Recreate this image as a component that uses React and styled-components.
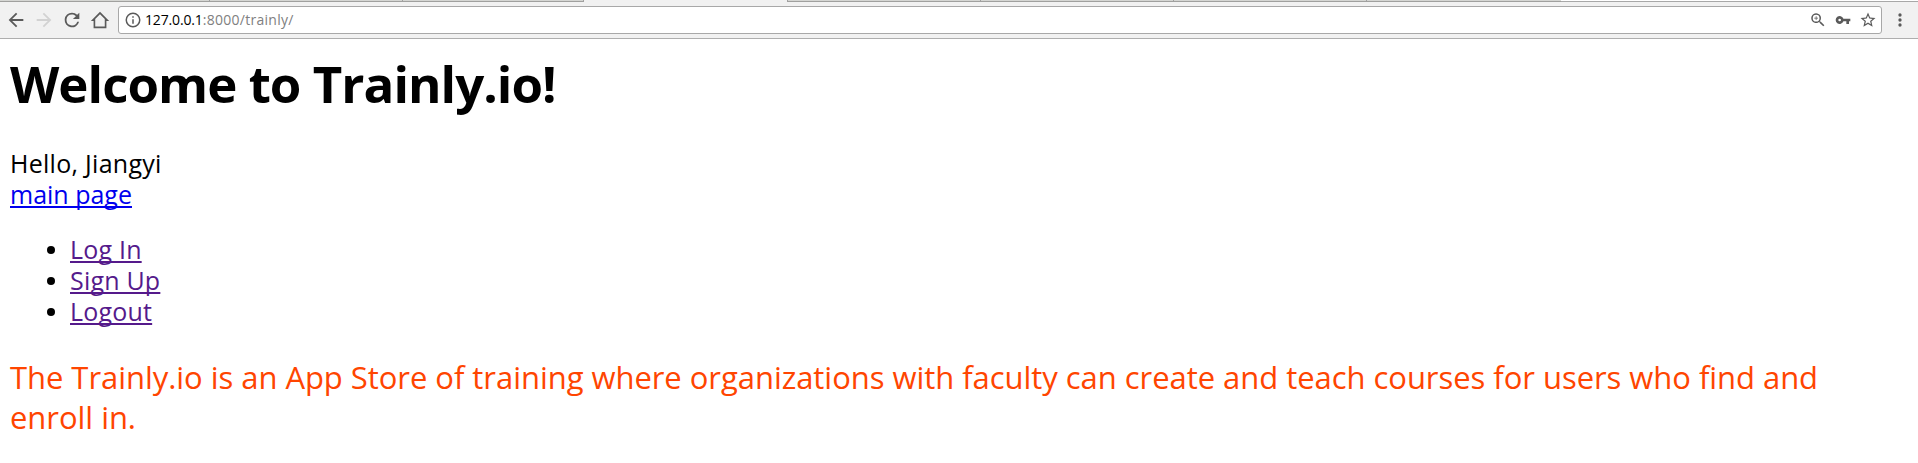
import React from "react";
import styled, { createGlobalStyle } from "styled-components";

const Global = createGlobalStyle`
  body { margin: 0; background: #fff; color: #000; font-family: "Open Sans", "Noto Sans", sans-serif; }
`;
const TabStrip = styled.div`
  display: flex; height: 1px; background: #fff;
`;
const Tab = styled.div`
  width: ${(p) => p.$w}px; box-sizing: border-box; height: 2px; flex: none;
  background: ${(p) => (p.$active ? "#f1f1f1" : "#d5d6d3")};
  border-right: ${(p) => (p.$last ? "none" : "1px solid #a0a0a0")};
  border-bottom: ${(p) => (p.$active ? "none" : "1px solid #a0a09e")};
  position: relative;
`;
const Toolbar = styled.div`
  display: flex; align-items: center; box-sizing: border-box; height: 38px;
  background: #f1f1f1; border-top: 1px solid #a8a8a8; border-bottom: 1px solid #aeaeae;
  padding: 0 8px 0 5px;
`;
const NavIcon = styled.svg`
  width: 22px; height: 22px; flex: none; margin-right: 6px;
  fill: ${(p) => (p.$dim ? "#d2d2d2" : "#5a5a5a")};
`;
const Address = styled.div`
  flex: 1; display: flex; align-items: center; box-sizing: border-box; height: 28px;
  background: #fff; border: 1px solid #a8a8a8; border-radius: 3px; padding: 0 4px 0 5px; margin: 0 8px 0 1px;
`;
const Url = styled.span`
  flex: 1; margin-left: 3px; font-size: 14px; line-height: 20px; letter-spacing: 0.27px; color: #808080;
`;
const Host = styled.span`color: #000; letter-spacing: -0.15px;`;
const FieldIcon = styled.svg`
  width: ${(p) => p.$s || 18}px; height: ${(p) => p.$s || 18}px; flex: none; margin-left: ${(p) => p.$gap || 0}px; fill: #5a5a5a;
`;
const Page = styled.main`padding: 0 10px;`;
const Title = styled.h1`
  margin: 9px 0 0; font-size: 51px; line-height: 70px; font-weight: 700; letter-spacing: -0.95px; white-space: nowrap;
`;
const Greeting = styled.div`margin-top: 30px; font-size: 25px; line-height: 31px;`;
const Hello = styled.span`letter-spacing: 0.28px;`;
const Link = styled.a`
  color: ${(p) => (p.$visited ? "#551a8b" : "#0000ee")};
  letter-spacing: ${(p) => (p.$visited ? "0.2px" : "0")};
  text-decoration: underline; text-decoration-thickness: 2px; text-underline-offset: 2px; text-decoration-skip-ink: none;
`;
const Menu = styled.ul`
  margin: 24px 0 0; padding-left: 60px; font-size: 25px; line-height: 31px; list-style: none;
`;
const Item = styled.li`
  display: flex; align-items: center;
  &::before { content: ""; width: 8px; height: 8px; border-radius: 50%; background: #000; margin: 1px 15px 0 -23px; }
`;
const Pitch = styled.p`
  margin: 30px 0 0; font-size: 31px; line-height: 40px; letter-spacing: -0.045px; color: #ff4500;
  font-variant-ligatures: none;
`;

export default function App() {
  return (
    <>
      <Global />
      <TabStrip>
        <Tab $w={210} /><Tab $w={193} /><Tab $w={181} /><Tab $w={204} $active />
        <Tab $w={193} /><Tab $w={193} /><Tab $w={193} /><Tab $w={194} $last />
      </TabStrip>
      <Toolbar>
        <NavIcon viewBox="0 0 24 24"><path d="M20 11H7.83l5.59-5.59L12 4l-8 8 8 8 1.41-1.41L7.83 13H20v-2z" /></NavIcon>
        <NavIcon viewBox="0 0 24 24" $dim><path d="M12 4l-1.41 1.41L16.17 11H4v2h12.17l-5.58 5.59L12 20l8-8z" /></NavIcon>
        <NavIcon viewBox="0 0 24 24"><path d="M17.65 6.35A7.96 7.96 0 0 0 12 4a8 8 0 1 0 7.73 10h-2.08A6 6 0 1 1 12 6c1.66 0 3.14.69 4.22 1.78L13 11h7V4l-2.35 2.35z" /></NavIcon>
        <NavIcon viewBox="0 0 24 24"><path fillRule="evenodd" d="M12 3l10 10h-3v8H5v-8H2L12 3zm0 2.8L6.8 11v8h10.4v-8L12 5.8z" /></NavIcon>
        <Address>
          <FieldIcon viewBox="0 0 24 24"><path d="M11 7h2v2h-2zm0 4h2v6h-2zm1-9a10 10 0 1 0 0 20 10 10 0 0 0 0-20zm0 18a8 8 0 1 1 0-16 8 8 0 0 1 0 16z" /></FieldIcon>
          <Url><Host>127.0.0.1</Host>:8000/trainly/</Url>
          <FieldIcon viewBox="0 0 24 24"><path d="M15.5 14h-.79l-.28-.27A6.5 6.5 0 1 0 13.73 14.43l.27.28v.79l5 4.99L20.49 19l-4.99-5zm-6 0a4.5 4.5 0 1 1 0-9 4.5 4.5 0 0 1 0 9zM12 10h-2v2H9v-2H7V9h2V7h1v2h2v1z" /></FieldIcon>
          <FieldIcon viewBox="0 0 24 24" $s={16} $gap={8}><path d="M12.65 10A6 6 0 1 0 12.65 14H17v4h4v-4h2v-4H12.65zM7 14a2 2 0 1 1 0-4 2 2 0 0 1 0 4z" /></FieldIcon>
          <FieldIcon viewBox="0 0 24 24" $gap={8}><path d="M22 9.24l-7.19-.62L12 2 9.19 8.63 2 9.24l5.46 4.73L5.82 21 12 17.27 18.18 21l-1.63-7.03L22 9.24zM12 15.4l-3.76 2.27 1-4.28-3.32-2.88 4.38-.38L12 6.1l1.71 4.04 4.38.38-3.32 2.88 1 4.28L12 15.4z" /></FieldIcon>
        </Address>
        <FieldIcon viewBox="0 0 24 24" $s={20}><path d="M12 8a2 2 0 1 0 0-4 2 2 0 0 0 0 4zm0 2a2 2 0 1 0 0 4 2 2 0 0 0 0-4zm0 6a2 2 0 1 0 0 4 2 2 0 0 0 0-4z" /></FieldIcon>
      </Toolbar>
      <Page>
        <Title>Welcome to Trainly.io!</Title>
        <Greeting><Hello>Hello, Jiangyi</Hello><br /><Link>main page</Link></Greeting>
        <Menu>
          <Item><Link $visited>Log In</Link></Item>
          <Item><Link $visited>Sign Up</Link></Item>
          <Item><Link $visited>Logout</Link></Item>
        </Menu>
        <Pitch>The Trainly.io is an App Store of training where organizations with faculty can create and teach courses for users who find and enroll in.</Pitch>
      </Page>
    </>
  );
}
